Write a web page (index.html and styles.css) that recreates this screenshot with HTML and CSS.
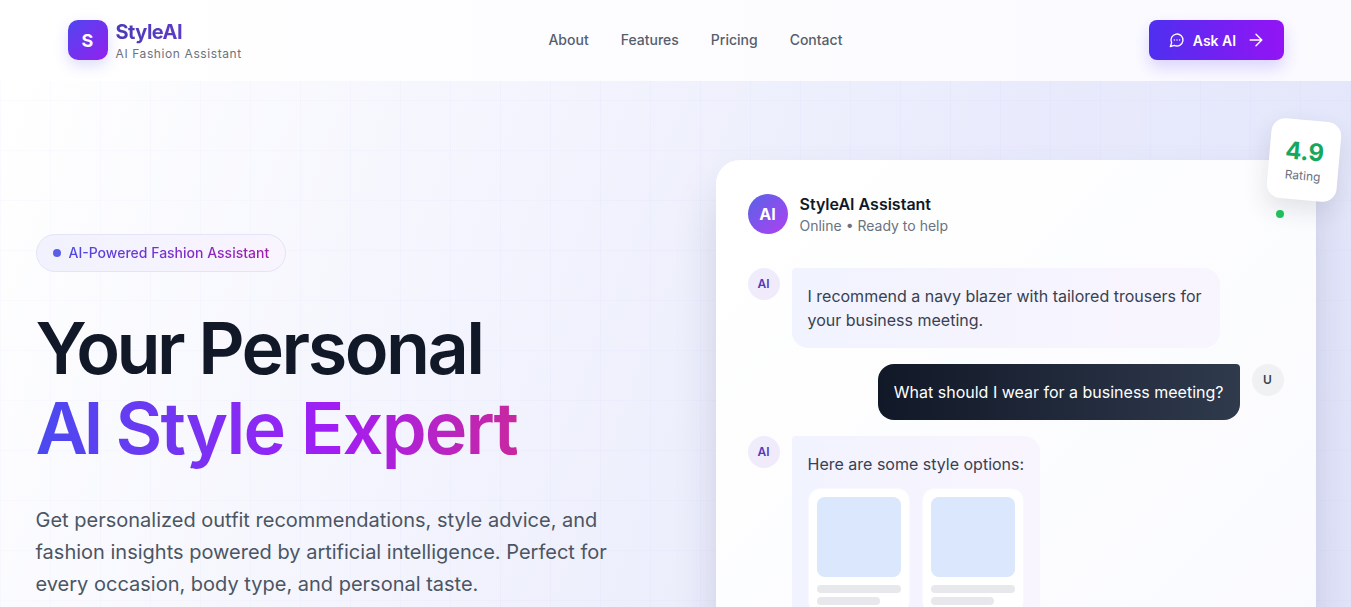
FILE: index.html
```html
<!DOCTYPE html>
<html lang="en">
<head>
  <meta charset="UTF-8" />
  <meta name="viewport" content="width=device-width, initial-scale=1.0"/>
  <title>StyleAI - AI Fashion Assistant</title>
  <link rel="stylesheet" href="styles.css">
</head>
<body>

  <header class="site-header">
    <div class="brand">
      <div class="brand-logo">S</div>
      <div class="brand-text">
        <div class="brand-name">StyleAI</div>
        <div class="brand-tag">AI Fashion Assistant</div>
      </div>
    </div>
    <nav class="main-nav">
      <a href="#">About</a>
      <a href="#">Features</a>
      <a href="#">Pricing</a>
      <a href="#">Contact</a>
    </nav>
    <button class="ask-btn">
      <svg class="ask-icon" viewBox="0 0 24 24" width="16" height="16" fill="none" stroke="currentColor" stroke-width="2" stroke-linecap="round" stroke-linejoin="round">
        <path d="M7.9 20A9 9 0 1 0 4 16.1L2 22Z"/>
        <path d="M8 12h.01M12 12h.01M16 12h.01"/>
      </svg>
      <span>Ask AI</span>
      <svg class="ask-arrow" viewBox="0 0 24 24" width="20" height="20" fill="none" stroke="currentColor" stroke-width="1.7" stroke-linecap="round" stroke-linejoin="round">
        <path d="M5 12h14M12 5l7 7-7 7"/>
      </svg>
    </button>
  </header>

  <main class="hero">
    <section class="hero-copy">
      <div class="pill"><span class="pill-dot"></span><span class="pill-text">AI-Powered Fashion Assistant</span></div>
      <h1><span class="tight-your">Your</span> <span class="tight-personal">Personal</span><br><span class="grad-text"><span class="tight-ai">AI</span> Style Expert</span></h1>
      <p class="lead">Get personalized outfit recommendations, style advice, and fashion insights powered by artificial intelligence. Perfect for every occasion, body type, and personal taste.</p>
    </section>

    <section class="chat-card">
      <div class="rating">
        <div class="rating-num">4.9</div>
        <div class="rating-label">Rating</div>
      </div>
      <div class="chat-head">
        <div class="chat-avatar">AI</div>
        <div class="chat-title">
          <div class="chat-name">StyleAI Assistant</div>
          <div class="chat-status">Online • Ready to help</div>
        </div>
        <span class="online-dot"></span>
      </div>

      <div class="msg">
        <div class="mini-avatar">AI</div>
        <div class="bubble">I recommend a navy blazer with tailored trousers for your business meeting.</div>
      </div>

      <div class="msg msg-user">
        <div class="bubble bubble-user">What should I wear for a business meeting?</div>
        <div class="mini-avatar user-avatar">U</div>
      </div>

      <div class="msg">
        <div class="mini-avatar">AI</div>
        <div class="bubble">
          Here are some style options:
          <div class="options">
            <div class="option">
              <div class="option-img"></div>
              <div class="line"></div>
              <div class="line line-short"></div>
            </div>
            <div class="option">
              <div class="option-img"></div>
              <div class="line"></div>
              <div class="line line-short"></div>
            </div>
          </div>
        </div>
      </div>
    </section>
  </main>

</body>
</html>
```

FILE: styles.css
```css
* {
  box-sizing: border-box;
}

html, body {
  margin: 0;
  height: 607px;
  overflow: hidden;
}

body {
  font-family: 'Inter', sans-serif;
  color: #111827;
  background: #fff;
}

.site-header {
  height: 81px;
  padding: 0 67px 1px 67.5px;
  display: flex;
  align-items: center;
  justify-content: space-between;
  background: linear-gradient(90deg, #ffffff, #fafaff);
}

.brand {
  display: flex;
  align-items: center;
  gap: 8px;
}

.brand-logo {
  width: 40px;
  height: 40px;
  border-radius: 10px;
  background: linear-gradient(135deg, #5046f0, #9320ee);
  color: #fff;
  font-weight: 700;
  font-size: 18px;
  display: flex;
  align-items: center;
  justify-content: center;
  box-shadow: 0 6px 14px rgba(79, 70, 229, 0.18);
}

.brand-text {
  padding-top: 2px;
}

.brand-name {
  font-size: 20px;
  line-height: 24px;
  font-weight: 700;
  letter-spacing: -0.5px;
  background: linear-gradient(90deg, #4b3bb5, #6d3ade);
  background-clip: text;
  -webkit-background-clip: text;
  color: transparent;
}

.brand-tag {
  margin-top: 2px;
  font-size: 12px;
  line-height: 16px;
  letter-spacing: 0.6px;
  color: #6b7280;
}

.main-nav {
  display: flex;
  gap: 32px;
  padding-bottom: 2px;
}

.main-nav a {
  font-size: 14px;
  font-weight: 500;
  color: #565e6d;
  text-decoration: none;
}

.ask-btn {
  width: 135px;
  height: 40px;
  border: none;
  border-radius: 8px;
  background: linear-gradient(90deg, #4f2ff0, #9314f5);
  color: #fff;
  font-family: inherit;
  font-size: 14px;
  font-weight: 600;
  display: flex;
  align-items: center;
  justify-content: center;
  gap: 8px;
  box-shadow: 0 8px 16px rgba(99, 60, 240, 0.2);
}

.ask-arrow {
  margin: 0 -2px 0 2px;
}

.hero {
  height: 526px;
  padding: 79px 35.5px 0;
  display: flex;
  justify-content: space-between;
  align-items: flex-start;
  background-color: #f5f6fe;
  background-image:
    linear-gradient(rgba(99, 102, 241, 0.025) 1px, transparent 1px),
    linear-gradient(90deg, rgba(99, 102, 241, 0.025) 1px, transparent 1px),
    linear-gradient(110deg, #ffffff 0%, #f3f4fd 35%, #e8eafc 70%, #e2e4fa 100%);
  background-size: 50px 50px, 50px 50px, 100% 100%;
  background-position: 0 19px, 0 0, 0 0;
}

.hero-copy {
  width: 600px;
  padding-top: 74px;
}

.pill {
  display: inline-flex;
  align-items: center;
  gap: 8px;
  height: 38px;
  padding: 0 16px 1px;
  border-radius: 19px;
  border: 1px solid #e3e5f7;
  background: linear-gradient(90deg, #f1f2fd, #f9f4fe);
  font-size: 14px;
  font-weight: 500;
}

.pill-dot {
  width: 8px;
  height: 8px;
  border-radius: 50%;
  background: #5b5fe6;
}

.pill-text {
  background: linear-gradient(90deg, #4f46e5, #a21caf);
  background-clip: text;
  -webkit-background-clip: text;
  color: transparent;
}

h1 {
  margin: 36px 0 0;
  font-size: 72px;
  line-height: 80px;
  font-weight: 600;
  letter-spacing: -1.8px;
  color: #111827;
}

.tight-your {
  letter-spacing: -3.6px;
}

.tight-personal {
  letter-spacing: -2.55px;
}

.tight-ai {
  letter-spacing: -4.3px;
}

.grad-text {
  background: linear-gradient(90deg, #4a4af0, #a21df5 62%, #c8289f);
  background-clip: text;
  -webkit-background-clip: text;
  color: transparent;
}

.lead {
  margin: 36px 0 0;
  font-size: 20px;
  line-height: 32px;
  color: #4b5563;
}

.chat-card {
  position: relative;
  width: 600px;
  height: 560px;
  padding: 32px;
  border-radius: 24px;
  background: linear-gradient(135deg, #ffffff, #f9fafe);
  box-shadow: 0 25px 50px -12px rgba(30, 35, 90, 0.25);
}

.rating {
  position: absolute;
  top: -40px;
  right: -23px;
  width: 70px;
  height: 80px;
  border-radius: 14px;
  background: #fff;
  transform: rotate(5deg);
  text-align: center;
  padding-top: 16px;
  box-shadow: 0 10px 25px rgba(31, 41, 55, 0.12);
}

.rating-num {
  font-size: 24px;
  line-height: 32px;
  font-weight: 700;
  color: #14a85f;
}

.rating-label {
  font-size: 12px;
  line-height: 16px;
  color: #6b7280;
}

.chat-head {
  display: flex;
  align-items: center;
  gap: 12px;
  height: 44px;
  margin-bottom: 32px;
}

.chat-avatar {
  width: 40px;
  height: 40px;
  border-radius: 50%;
  background: linear-gradient(135deg, #5763e8, #b040f0);
  color: #fff;
  font-weight: 700;
  font-size: 16px;
  display: flex;
  align-items: center;
  justify-content: center;
}

.chat-title {
  flex: 1;
  margin-top: 2px;
}

.chat-name {
  font-size: 16px;
  line-height: 22px;
  font-weight: 600;
}

.chat-status {
  font-size: 14px;
  line-height: 22px;
  color: #6b7280;
}

.online-dot {
  width: 8px;
  height: 8px;
  border-radius: 50%;
  background: #22c55e;
}

.msg {
  display: flex;
  align-items: flex-start;
  gap: 12px;
  margin-bottom: 16px;
}

.msg-user {
  justify-content: flex-end;
}

.mini-avatar {
  flex: none;
  width: 32px;
  height: 32px;
  padding-bottom: 1px;
  border-radius: 50%;
  background: linear-gradient(135deg, #eeeefc, #f1e9fb);
  color: #5438b8;
  font-size: 12px;
  font-weight: 600;
  display: flex;
  align-items: center;
  justify-content: center;
}

.user-avatar {
  background: #f0f1f3;
  color: #374151;
}

.bubble {
  max-width: 428px;
  padding: 16px;
  border-radius: 4px 16px 16px 16px;
  background: linear-gradient(90deg, #f1f3fe, #f9f5fe);
  color: #374151;
  font-size: 16px;
  line-height: 24px;
}

.bubble-user {
  border-radius: 16px 4px 16px 16px;
  background: linear-gradient(90deg, #111827, #2f3a4d);
  color: #fff;
}

.options {
  display: flex;
  gap: 12px;
  margin-top: 12px;
}

.option {
  width: 102px;
  padding: 8px;
  border: 1px solid #f8f8fe;
  border-radius: 12px;
  background: #fff;
}

.option-img {
  height: 80px;
  border-radius: 8px;
  background: #dbe7fc;
}

.line {
  height: 8px;
  margin-top: 8px;
  border-radius: 4px;
  background: #e7e8ec;
}

.line-short {
  width: 75%;
  margin-top: 4px;
}
```
